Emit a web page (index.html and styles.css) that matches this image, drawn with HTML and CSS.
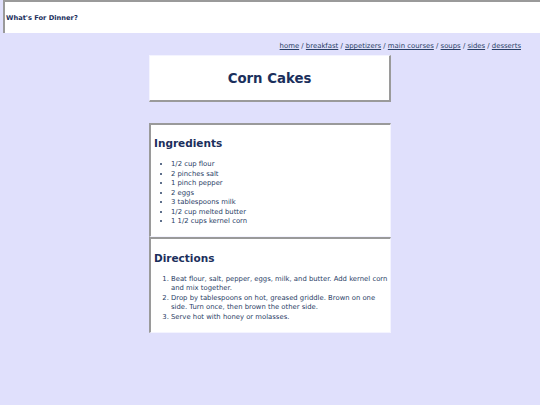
FILE: index.html
```html
<!DOCTYPE html>
<html lang="en">
<head>
  <meta charset="UTF-8">
  <meta name="viewport" content="width=device-width, initial-scale=1">
  <title>Corn Cakes - What's For Dinner?</title>
  <link rel="stylesheet" href="styles.css">
</head>
<body>
  <div class="masthead">What's For Dinner?</div>

  <div class="nav">
    <a href="#">home</a> / <a href="#">breakfast</a> / <a href="#">appetizers</a> /
    <a href="#">main courses</a> / <a href="#">soups</a> / <a href="#">sides</a> /
    <a href="#">desserts</a>
  </div>

  <div class="recipe">
    <div class="title-box">
      <h1>Corn Cakes</h1>
    </div>

    <div class="section ingredients">
      <h2>Ingredients</h2>
      <ul>
        <li>1/2 cup flour</li>
        <li>2 pinches salt</li>
        <li>1 pinch pepper</li>
        <li>2 eggs</li>
        <li>3 tablespoons milk</li>
        <li>1/2 cup melted butter</li>
        <li>1 1/2 cups kernel corn</li>
      </ul>
    </div>

    <div class="section directions">
      <h2>Directions</h2>
      <ol>
        <li>Beat flour, salt, pepper, eggs, milk, and butter. Add kernel corn and mix together.</li>
        <li>Drop by tablespoons on hot, greased griddle. Brown on one side. Turn once, then brown the other side.</li>
        <li>Serve hot with honey or molasses.</li>
      </ol>
    </div>
  </div>
</body>
</html>
```

FILE: styles.css
```css
body {
  font-family: "DejaVu Sans", Verdana, sans-serif;
  font-size: 6.85px;
  margin: 0;
  padding: 0;
  background: #e0e0fc;
  color: #2a4066;
}

.masthead {
  margin-left: 3px;
  height: 31px;
  padding-left: 1px;
  background: #fff;
  border-top: 2px solid #9a9a9a;
  border-left: 2px solid #9a9a9a;
  display: flex;
  align-items: center;
  font-size: 6.7px;
  font-weight: bold;
  color: #1b2f5c;
}

.nav {
  text-align: right;
  padding: 9px 19px 0 0;
  line-height: 9px;
  font-size: 6.9px;
}

.nav a {
  color: #2a4066;
}

.recipe {
  width: 242px;
  margin: 4px auto 0;
}

.title-box {
  background: #fff;
  border-top: 1px solid #f4f4ff;
  border-left: 1px solid #f4f4ff;
  border-right: 2px solid #9a9a9a;
  border-bottom: 2px solid #9a9a9a;
  height: 44px;
  display: flex;
  align-items: center;
  justify-content: center;
}

h1 {
  margin: 0;
  font-size: 13.3px;
  color: #1b2f5c;
}

.section {
  background: #fff;
  border-top: 2px solid #9a9a9a;
  border-left: 2px solid #9a9a9a;
  border-right: 1px solid #f4f4ff;
  border-bottom: 1px solid #f4f4ff;
  padding: 0 1px 0 3px;
}

.ingredients {
  margin-top: 21px;
  padding-top: 12px;
  padding-bottom: 9px;
}

.directions {
  padding-top: 13px;
  padding-bottom: 10px;
}

h2 {
  margin: 0 0 10px;
  font-size: 10.5px;
  line-height: 13px;
  color: #1b2f5c;
}

ul, ol {
  margin: 0;
  padding-left: 17px;
  line-height: 9.5px;
}
```
